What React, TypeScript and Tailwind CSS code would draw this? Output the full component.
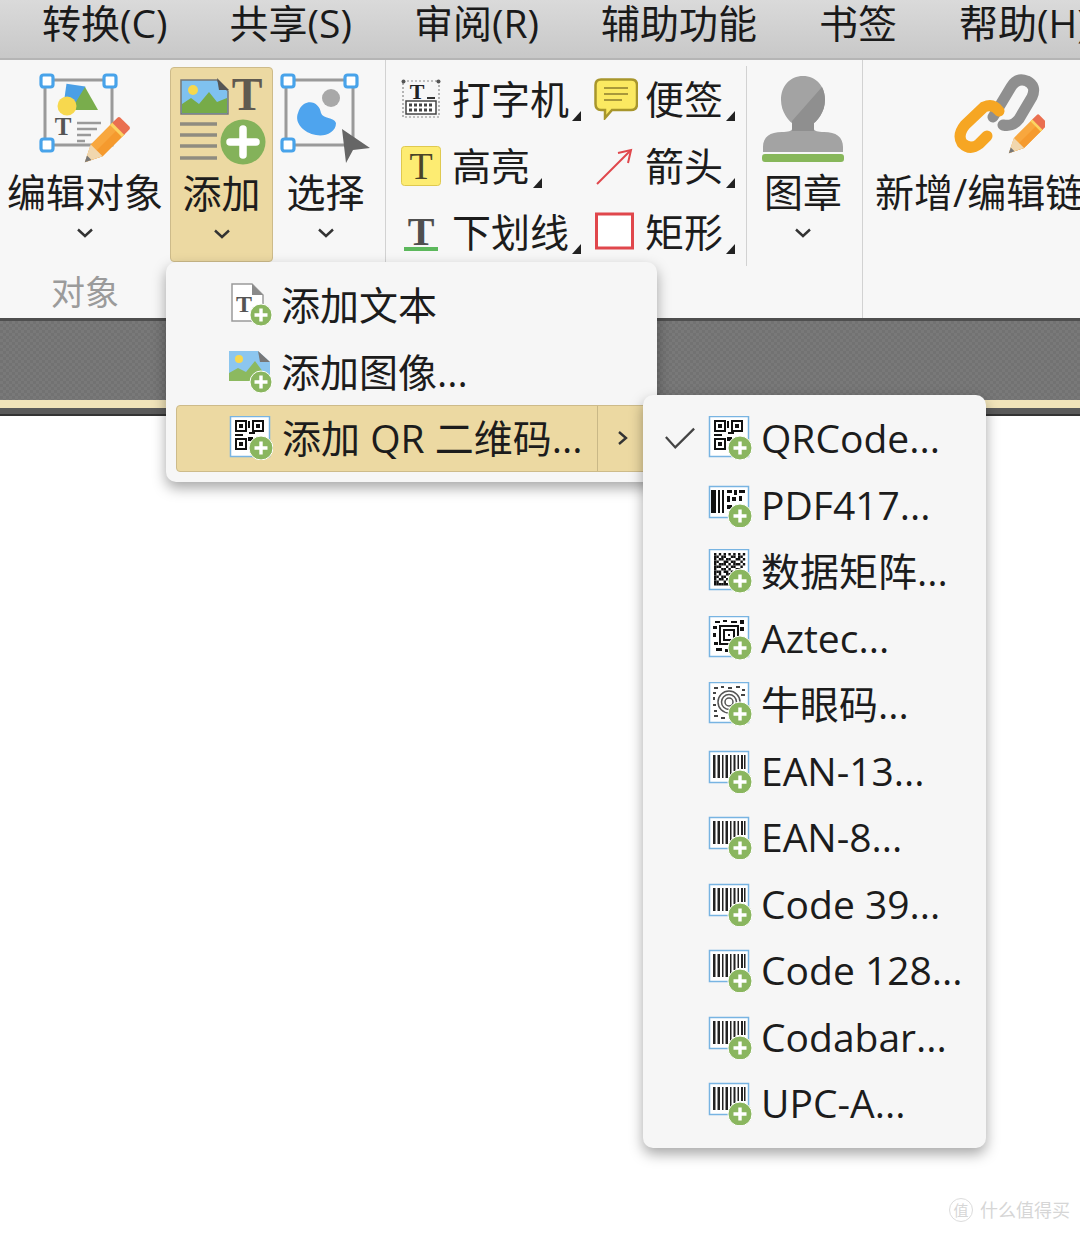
import React from 'react';

const FONT = "font-['Open_Sans','Noto_Sans_CJK_SC',sans-serif]";

const Chevron = () => (
    <svg width="18" height="12" viewBox="0 0 18 12" fill="none" stroke="#333" strokeWidth="2.4">
        <path d="M2 2.5 L9 9 L16 2.5" />
    </svg>
);

const Corner = () => (
    <svg width="9" height="10" viewBox="0 0 9 10" className="self-center ml-[3px] translate-y-[17px] shrink-0">
        <path d="M9 0 V10 H0 Z" fill="#222" />
    </svg>
);

const Pencil = ({ x, y, s = 1 }: { x: number; y: number; s?: number }) => (
    <g transform={`translate(${x} ${y}) rotate(45) scale(${s})`}>
        <path d="M-8 -8 H8 V22 L0 38 L-8 22 Z" fill="#f8a73e" />
        <path d="M0 -8 H8 V22 L0 38 Z" fill="#f59a2e" />
        <path d="M-8 22 H8 L0 38 Z" fill="#f1d7ae" />
        <path d="M-3 32 L3 32 L0 38 Z" fill="#777" />
        <rect x="-8" y="-16" width="16" height="10" rx="2" fill="#ea6f50" />
        <rect x="-8" y="-7" width="16" height="3" fill="#fbd463" />
    </g>
);

const Handle = ({ x, y }: { x: number; y: number }) => (
    <rect x={x - 6} y={y - 6} width="12" height="12" rx="2.5" fill="#fff" stroke="#48a3ea" strokeWidth="3.2" />
);

const EditObjectIcon = () => (
    <svg width="92" height="92" viewBox="0 0 92 92" className="overflow-visible">
        <rect x="6" y="7" width="67" height="65" fill="none" stroke="#9a9a9a" strokeWidth="3" />
        <rect x="26" y="12" width="19" height="20" fill="#4a9fe6" transform="rotate(8 35 22)" />
        <path d="M32 37 L46 14 L59 37 Z" fill="#79ad4c" />
        <circle cx="28" cy="33" r="9.5" fill="#f7d84e" />
        <text x="24" y="62" textAnchor="middle" fontFamily="Liberation Serif" fontWeight="700" fontSize="25" fill="#555">T</text>
        <path d="M38 50 H62 M38 56 H58 M38 62 H52 M38 68 H46" stroke="#9a9a9a" strokeWidth="2.4" />
        <Handle x={8} y={8} />
        <Handle x={71} y={8} />
        <Handle x={8} y={72} />
        <Pencil x={74} y={61} s={1.05} />
    </svg>
);

const AddIcon = () => (
    <svg width="92" height="92" viewBox="-3 0 92 92" className="overflow-visible">
        <path d="M2 6 H38 L49 17 V40 H2 Z" fill="#7fc1ef" stroke="#777" strokeWidth="1.5" />
        <circle cx="14" cy="16" r="5" fill="#f7d84e" />
        <path d="M3 39 V30 L12 24 L20 30 L30 18 L38 28 L48 24 V39 Z" fill="#77ab48" />
        <path d="M38 4 L50 16 L40 16 Z" fill="#555" />
        <text x="68" y="36" textAnchor="middle" fontFamily="Liberation Serif" fontWeight="700" fontSize="46" fill="#5f5a50">T</text>
        <path d="M1 50 H38 M1 61 H38 M1 72 H38 M1 84 H38" stroke="#8f8c80" strokeWidth="3.4" />
        <circle cx="64" cy="68" r="22.5" fill="#84b25a" />
        <path d="M64 55 V81 M51 68 H77" stroke="#fff" strokeWidth="7.5" strokeLinecap="round" />
    </svg>
);

const SelectIcon = () => (
    <svg width="92" height="92" viewBox="0 0 92 92">
        <rect x="6" y="7" width="67" height="65" fill="none" stroke="#9a9a9a" strokeWidth="3" />
        <circle cx="51" cy="25" r="9" fill="#a8a8a8" />
        <path d="M24 31 C32 26 40 32 41 40 C43 46 54 44 56 50 C56 60 44 64 36 62 C24 60 14 50 18 40 C19 36 21 33 24 31 Z" fill="#4ea4ee" />
        <Handle x={8} y={8} />
        <Handle x={71} y={8} />
        <Handle x={8} y={72} />
        <path d="M62 56 L90 75 L73 77 L66 90 Z" fill="#666" />
    </svg>
);

const TypewriterIcon = () => (
    <svg width="40" height="40" viewBox="0 0 40 40" className="overflow-visible">
        <rect x="2" y="2" width="36" height="36" fill="none" stroke="#888" strokeWidth="1.2" strokeDasharray="2 2" />
        <circle cx="2.5" cy="2.5" r="2" fill="#555" />
        <circle cx="37.5" cy="2.5" r="2" fill="#555" />
        <text x="16" y="20" textAnchor="middle" fontFamily="Liberation Serif" fontWeight="700" fontSize="22" fill="#222">T</text>
        <path d="M26 19 H34" stroke="#333" strokeWidth="2" />
        <rect x="5" y="22" width="30" height="13" fill="#fff" stroke="#444" strokeWidth="1.5" />
        <path d="M8 26 H32 M8 31 H32" stroke="#444" strokeWidth="3" strokeDasharray="3 2" />
    </svg>
);

const NoteIcon = () => (
    <svg width="44" height="42" viewBox="0 0 44 42">
        <path d="M7 1.5 H37 Q43 1.5 43 7 V26 Q43 32 37 32 H18 L11 40 V32 H7 Q1.5 32 1.5 26 V7 Q1.5 1.5 7 1.5 Z" fill="#fbe961" stroke="#a8962c" strokeWidth="2.5" />
        <path d="M10 10 H34 M10 16 H34 M10 22 H28" stroke="#a8983a" strokeWidth="2" />
    </svg>
);

const HighlightIcon = () => (
    <svg width="40" height="40" viewBox="0 0 40 40" className="overflow-visible">
        <rect x="0.5" y="0.5" width="39" height="39" rx="3" fill="#fdec72" stroke="#dfc94f" />
        <text x="20" y="33" textAnchor="middle" fontFamily="Liberation Serif" fontSize="38" fill="#4a4428">T</text>
    </svg>
);

const ArrowIcon = () => (
    <svg width="40" height="40" viewBox="0 0 40 40" fill="none" stroke="#e0474c" strokeWidth="2">
        <path d="M3 38 L36 5" />
        <path d="M24 7 L37 4 L34 17" />
    </svg>
);

const UnderlineIcon = () => (
    <svg width="40" height="40" viewBox="0 0 40 40" className="overflow-visible">
        <text x="20" y="33" textAnchor="middle" fontFamily="Liberation Serif" fontSize="40" fontWeight="700" fill="#4f4f4f">T</text>
        <rect x="3" y="35" width="34" height="4" fill="#5cb85c" />
    </svg>
);

const RectIcon = () => (
    <svg width="40" height="40" viewBox="0 0 40 40">
        <rect x="2.5" y="2" width="36" height="34" fill="#fff" stroke="#e0474c" strokeWidth="3" />
    </svg>
);

const StampIcon = () => (
    <svg width="82" height="88" viewBox="0 0 82 88">
        <path d="M41 1 C54 1 63 11 63 25 C63 37 55 46 52 48 V54 C52 56 56 57 62 57 C74 57 81 62 81 72 V77 H1 V72 C1 62 8 57 20 57 C26 57 30 56 30 54 V48 C27 46 19 37 19 25 C19 11 28 1 41 1 Z" fill="#a3a3a3" />
        <path d="M30 46 L60 12 C62 16 63 20 63 25 C63 37 55 46 52 48 V56 H30 Z" fill="#8f8f8f" />
        <rect x="0" y="79" width="82" height="8" rx="3" fill="#87b75a" />
    </svg>
);

const LinkIcon = () => (
    <svg width="92" height="92" viewBox="0 0 92 92" fill="none">
        <path d="M40 44 L58 14 Q64 4 74 8 Q84 13 79 24 L66 46 Q60 54 50 52" stroke="#8f8f8f" strokeWidth="11" strokeLinecap="round" />
        <path d="M46 38 Q40 30 31 34 L12 52 Q4 62 9 70 Q17 78 26 71 L34 63" stroke="#f6a623" strokeWidth="11" strokeLinecap="round" />
        <Pencil x={80} y={56} s={0.9} />
    </svg>
);

const LargeButton = ({ icon, label, width, active }: { icon: React.ReactNode; label: string; width: string; active?: boolean }) => (
    <div className={`${width} h-[195px] flex flex-col items-center pt-[6px] rounded-[4px] ${active ? 'bg-[#ecd9a2] border border-[#cdbb8a]' : ''}`}>
        <div className="h-[92px] flex items-center justify-center">{icon}</div>
        <span className="mt-[8px] h-[40px] leading-[38px] text-[39px] whitespace-nowrap text-[#1c1c1c]">{label}</span>
        <div className="mt-[14px] h-[12px] flex items-center"><Chevron /></div>
    </div>
);

const SmallTool = ({ icon, label }: { icon: React.ReactNode; label: string }) => (
    <div className="flex items-center h-[66.5px]">
        <div className="w-[51px] shrink-0">{icon}</div>
        <span className="text-[39px] leading-[44px] text-[#1c1c1c] whitespace-nowrap">{label}</span>
        <Corner />
    </div>
);

const PlusBadge = ({ cx = 32, cy = 32, r = 12 }: { cx?: number; cy?: number; r?: number }) => (
    <>
        <circle cx={cx} cy={cy} r={r} fill="#8ab65f" stroke="#fff" strokeWidth="1" />
        <path d={`M${cx} ${cy - 6.5} V${cy + 6.5} M${cx - 6.5} ${cy} H${cx + 6.5}`} stroke="#fff" strokeWidth="3.4" />
    </>
);

const Finder = ({ x, y }: { x: number; y: number }) => (
    <>
        <rect x={x + 1} y={y + 1} width="10" height="10" fill="#fff" stroke="#111" strokeWidth="2" />
        <rect x={x + 4} y={y + 4} width="4" height="4" fill="#111" />
    </>
);

const Frame = ({ children, top = 0, h = 40 }: { children: React.ReactNode; top?: number; h?: number }) => (
    <>
        <rect x="1.5" y={top + 0.5} width="39" height={h} fill="#fff" stroke="#78b4e2" strokeWidth="1.5" />
        {children}
        <PlusBadge cy={top === 0 ? 32 : 33} />
    </>
);

const QrIcon = () => (
    <svg width="44" height="44" viewBox="0 0 44 44">
        <Frame>
            <Finder x={6} y={4} />
            <Finder x={23} y={4} />
            <Finder x={6} y={22} />
            <path d="M19 5 H21 V12 H19 Z M20 16 H26 V18 H20 Z M19 21 H24 V25 H19 Z M6 18 H14 V20 H6 Z" fill="#111" />
        </Frame>
    </svg>
);

const PdfIcon = () => (
    <svg width="44" height="44" viewBox="0 0 44 44">
        <Frame top={3} h={31}>
            <path d="M3 7 H8 V30 H3 Z M10 7 H12 V30 H10 Z M14 7 H16 V30 H14 Z" fill="#111" />
            <path d="M19 7 H24 V10 H19 Z M26 7 H29 V12 H26 Z M31 7 H37 V10 H31 Z M19 13 H22 V19 H19 Z M24 14 H28 V18 H24 Z M31 13 H34 V18 H31 Z M19 22 H24 V26 H19 Z" fill="#111" />
        </Frame>
    </svg>
);

const MATRIX = [
    '1010101010101',
    '1101100110110',
    '1011011001101',
    '1100110110010',
    '1011101011101',
    '1110010110010',
    '1001101001100',
    '1110110100010',
    '1010011010000',
    '1101100110000',
    '1011010100000',
    '1100101000000',
    '1111111100000',
];

const MatrixIcon = () => (
    <svg width="44" height="44" viewBox="0 0 44 44">
        <Frame>
            {MATRIX.map((row, y) =>
                row.split('').map((c, x) => (c === '1' ? <rect key={`${x}-${y}`} x={6 + x * 2.4} y={4 + y * 2.5} width="2.4" height="2.5" fill="#111" /> : null))
            )}
        </Frame>
    </svg>
);

const AztecIcon = () => (
    <svg width="44" height="44" viewBox="0 0 44 44">
        <Frame>
            <path d="M7 5 H12 V7 H7 Z M15 4 H19 V6 H15 Z M23 5 H29 V7 H23 Z M32 4 H36 V8 H32 Z M5 10 H9 V13 H5 Z M5 17 H8 V21 H5 Z M6 26 H10 V29 H6 Z M8 32 H14 V35 H8 Z M17 33 H20 V36 H17 Z M32 11 H36 V15 H32 Z" fill="#111" />
            <rect x="12" y="10" width="18" height="18" fill="none" stroke="#111" strokeWidth="2" />
            <rect x="16" y="14" width="10" height="10" fill="none" stroke="#111" strokeWidth="2" />
            <rect x="20" y="18" width="2" height="2" fill="#111" />
        </Frame>
    </svg>
);

const BullseyeIcon = () => (
    <svg width="44" height="44" viewBox="0 0 44 44">
        <Frame>
            <path d="M6 5 H10 V7 H6 Z M13 4 H16 V6 H13 Z M20 5 H24 V7 H20 Z M28 4 H32 V6 H28 Z M34 7 H37 V9 H34 Z M5 10 H8 V12 H5 Z M5 15 H7 V18 H5 Z M5 22 H8 V24 H5 Z M6 28 H9 V30 H6 Z M6 33 H10 V35 H6 Z M13 35 H17 V37 H13 Z M33 12 H37 V14 H33 Z" fill="#444" />
            <circle cx="21" cy="20" r="11" fill="none" stroke="#555" strokeWidth="1.5" />
            <circle cx="21" cy="20" r="7.5" fill="none" stroke="#555" strokeWidth="1.5" />
            <circle cx="21" cy="20" r="4" fill="none" stroke="#555" strokeWidth="1.5" />
        </Frame>
    </svg>
);

const BarcodeIcon = () => (
    <svg width="44" height="44" viewBox="0 0 44 44">
        <Frame top={2} h={31}>
            <path d="M5 6 H7.5 V29 H5 Z M9.5 6 H12 V29 H9.5 Z M14 6 H15.5 V29 H14 Z M17.5 6 H20 V29 H17.5 Z M22 6 H23.5 V27 H22 Z M25.5 6 H27.5 V22 H25.5 Z M29.5 6 H31 V20 H29.5 Z M33 6 H35 V20 H33 Z M36 6 H37.5 V20 H36 Z" fill="#222" />
        </Frame>
    </svg>
);

const TextAddIcon = () => (
    <svg width="46" height="44" viewBox="0 0 46 44" className="overflow-visible">
        <path d="M4 1 H24 L35 12 V38 H4 Z" fill="#fff" stroke="#9a9a9a" strokeWidth="1.5" />
        <path d="M24 1 L35 12 H24 Z" fill="#8a8a8a" />
        <text x="16" y="29" textAnchor="middle" fontFamily="Liberation Serif" fontWeight="700" fontSize="24" fill="#555">T</text>
        <PlusBadge cx={33} cy={32} r={11} />
    </svg>
);

const ImageAddIcon = () => (
    <svg width="46" height="44" viewBox="0 0 46 44">
        <path d="M1 1 H30 L42 12 V31 H1 Z" fill="#8cc6ef" />
        <circle cx="11" cy="9" r="4" fill="#f7d84e" />
        <path d="M1 31 V23 L10 18 L18 22 L27 11 L38 26 L38 31 Z" fill="#8cb95f" />
        <path d="M30 1 L42 12 L32 12 Z" fill="#777" />
        <PlusBadge cx={33} cy={32} r={11} />
    </svg>
);

const Watermark = () => (
    <div className="absolute right-[10px] bottom-[10px] flex items-center gap-[7px] text-[#d6d6d6] text-[18px] leading-[26px]">
        <span className="w-[24px] h-[24px] rounded-full border border-[#dcdcdc] flex items-center justify-center text-[15px]">值</span>
        <span>什么值得买</span>
    </div>
);

const SUB_ITEMS: { label: string; icon: React.ReactNode; checked?: boolean }[] = [
    { label: 'QRCode...', icon: <QrIcon />, checked: true },
    { label: 'PDF417...', icon: <PdfIcon /> },
    { label: '数据矩阵...', icon: <MatrixIcon /> },
    { label: 'Aztec...', icon: <AztecIcon /> },
    { label: '牛眼码...', icon: <BullseyeIcon /> },
    { label: 'EAN-13...', icon: <BarcodeIcon /> },
    { label: 'EAN-8...', icon: <BarcodeIcon /> },
    { label: 'Code 39...', icon: <BarcodeIcon /> },
    { label: 'Code 128...', icon: <BarcodeIcon /> },
    { label: 'Codabar...', icon: <BarcodeIcon /> },
    { label: 'UPC-A...', icon: <BarcodeIcon /> },
];

export default function App() {
    return (
        <div className={`relative w-[1080px] h-[1233px] overflow-hidden bg-white ${FONT}`}>
            {/* menu bar */}
            <div className="h-[60px] flex items-center gap-[62px] pl-[42px] pb-[12px] bg-linear-to-b from-[#dadada] to-[#c8c8c8] border-b-[2px] border-[#b5b5b5] text-[39px] leading-[40px] text-[#1a1a1a] whitespace-nowrap">
                <span>转换(C)</span>
                <span>共享(S)</span>
                <span>审阅(R)</span>
                <span>辅助功能</span>
                <span>书签</span>
                <span>帮助(H)</span>
            </div>

            {/* ribbon */}
            <div className="h-[258px] flex bg-[#f7f7f7]">
                <div className="w-[386px] shrink-0 border-r border-[#d2d2d2] flex flex-col">
                    <div className="flex pt-[7px]">
                        <LargeButton icon={<EditObjectIcon />} label="编辑对象" width="w-[170px]" />
                        <LargeButton icon={<AddIcon />} label="添加" width="w-[103px]" active />
                        <div className="w-[1px]" />
                        <LargeButton icon={<SelectIcon />} label="选择" width="w-[103px]" />
                    </div>
                    <div className="w-[170px] mt-[8px] text-center text-[34px] leading-[44px] text-[#9b9b9b]">对象</div>
                </div>

                <div className="w-[361px] shrink-0 h-[200px] mt-[6px] border-r border-[#d2d2d2] pl-[15px] grid grid-cols-[193px_1fr] content-start">
                    <SmallTool icon={<TypewriterIcon />} label="打字机" />
                    <SmallTool icon={<NoteIcon />} label="便签" />
                    <SmallTool icon={<HighlightIcon />} label="高亮" />
                    <SmallTool icon={<ArrowIcon />} label="箭头" />
                    <SmallTool icon={<UnderlineIcon />} label="下划线" />
                    <SmallTool icon={<RectIcon />} label="矩形" />
                </div>

                <div className="w-[116px] shrink-0 border-r border-[#d2d2d2] pt-[7px]">
                    <LargeButton icon={<StampIcon />} label="图章" width="w-[112px]" />
                </div>

                <div className="pt-[13px] pl-[12px] flex flex-col items-center">
                    <div className="h-[92px]"><LinkIcon /></div>
                    <span className="mt-[8px] h-[40px] leading-[38px] text-[39px] whitespace-nowrap text-[#1c1c1c]">新增/编辑链接</span>
                </div>
            </div>

            {/* document area behind the menus */}
            <div className="h-[82px] border-t-[3px] border-[#4f4f4f] bg-[repeating-conic-gradient(#727272_0_25%,#797979_0_50%)] bg-[length:6px_6px]" />
            <div className="h-[8px] bg-[#f1e4ba]" />
            <div className="h-[8px] bg-[#5a5a5a] border-b-[2px] border-[#333]" />

            {/* add menu */}
            <div className="absolute left-[166px] top-[262px] w-[491px] rounded-[10px] bg-[#f6f6f6] pt-[10px] pb-[10px] px-[10px] shadow-[0_6px_14px_rgba(0,0,0,0.35)]">
                <div className="h-[66.5px] flex items-center pl-[52px] text-[39px] text-[#1c1c1c]">
                    <div className="w-[53px]"><TextAddIcon /></div>
                    <span>添加文本</span>
                </div>
                <div className="h-[66.5px] flex items-center pl-[52px] text-[39px] text-[#1c1c1c]">
                    <div className="w-[53px]"><ImageAddIcon /></div>
                    <span>添加图像...</span>
                </div>
                <div className="h-[66.5px] flex items-center pl-[52px] text-[39px] text-[#1c1c1c] bg-[#ecd9a2] border border-[#cdbb8a] rounded-[4px]">
                    <div className="w-[53px]"><QrIcon /></div>
                    <span className="w-[315px] whitespace-nowrap">添加 QR 二维码...</span>
                    <div className="h-full border-l border-[#c9b887] pl-[19px] flex items-center">
                        <svg width="12" height="18" viewBox="0 0 12 18" fill="none" stroke="#333" strokeWidth="2.4">
                            <path d="M2 3 L9 9 L2 15" />
                        </svg>
                    </div>
                </div>
            </div>

            {/* qr type submenu */}
            <div className="absolute left-[643px] top-[395px] w-[343px] rounded-[10px] bg-[#f6f6f6] pt-[10px] pb-[11px] shadow-[0_6px_14px_rgba(0,0,0,0.35)]">
                {SUB_ITEMS.map(item => (
                    <div key={item.label} className="h-[66.5px] flex items-center text-[39px] text-[#1c1c1c] whitespace-nowrap">
                        <div className="w-[65px] flex justify-end pr-[12px]">
                            {item.checked && (
                                <svg width="32" height="24" viewBox="0 0 34 24" fill="none" stroke="#444" strokeWidth="2.4">
                                    <path d="M2 11 L12 22 L32 2" />
                                </svg>
                            )}
                        </div>
                        <div className="w-[53px]">{item.icon}</div>
                        <span>{item.label}</span>
                    </div>
                ))}
            </div>

            <Watermark />
        </div>
    );
}
